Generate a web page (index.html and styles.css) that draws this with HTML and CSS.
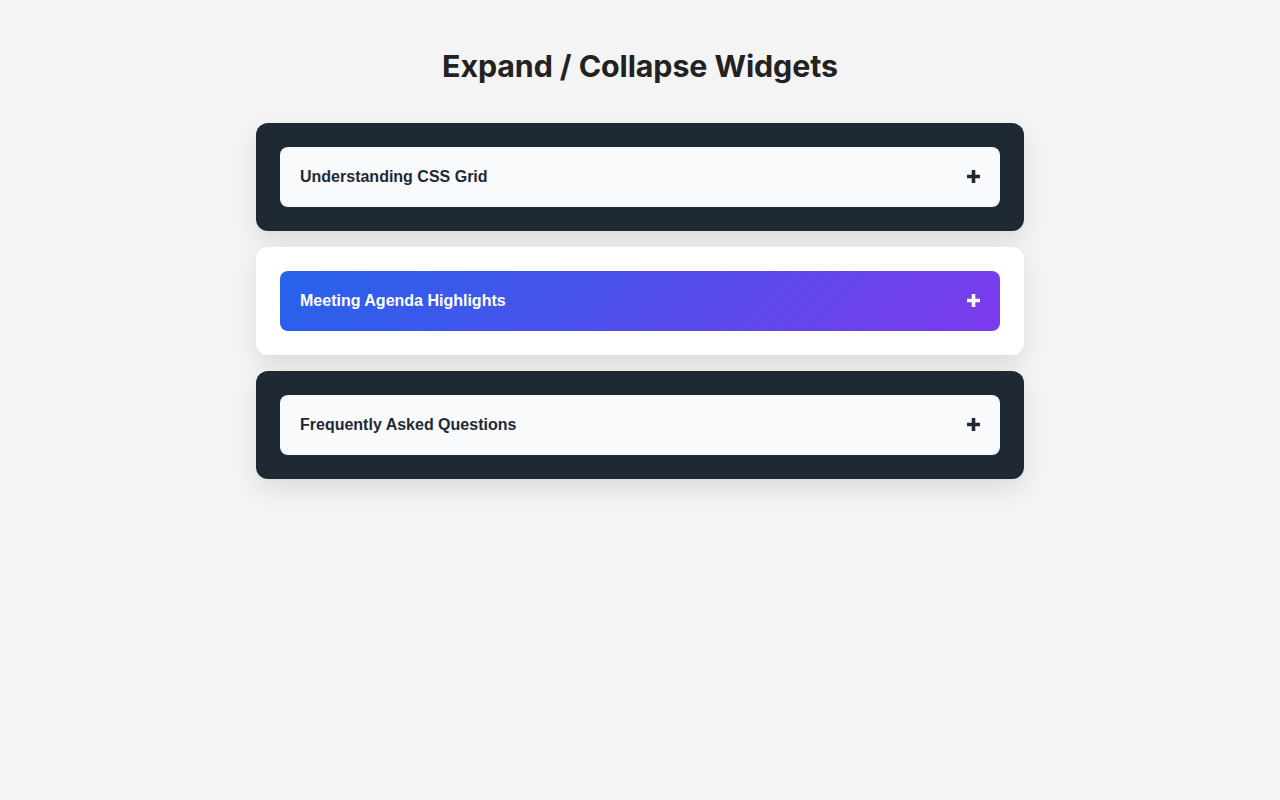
FILE: index.html
```html
<!DOCTYPE html>
<html lang="en">
<head>
<meta charset="utf-8">
<title>Expand / Collapse Widgets</title>
<link rel="stylesheet" href="styles.css">
</head>
<body>
<main class="page">
  <h1 class="title">Expand / Collapse Widgets</h1>
  <div class="list">
    <section class="card card-dark">
      <button class="head head-light" type="button">
        <span class="label">Understanding CSS Grid</span>
        <svg class="plus" width="13" height="13" viewBox="0 0 13 13"><path d="M6.5 0v13M0 6.5h13" stroke="currentColor" stroke-width="3.6"/></svg>
      </button>
    </section>
    <section class="card card-white">
      <button class="head head-grad" type="button">
        <span class="label">Meeting Agenda Highlights</span>
        <svg class="plus" width="13" height="13" viewBox="0 0 13 13"><path d="M6.5 0v13M0 6.5h13" stroke="currentColor" stroke-width="3.6"/></svg>
      </button>
    </section>
    <section class="card card-dark">
      <button class="head head-light" type="button">
        <span class="label">Frequently Asked Questions</span>
        <svg class="plus" width="13" height="13" viewBox="0 0 13 13"><path d="M6.5 0v13M0 6.5h13" stroke="currentColor" stroke-width="3.6"/></svg>
      </button>
    </section>
  </div>
</main>
</body>
</html>
```
FILE: styles.css
```css
html, body {
  margin: 0;
  padding: 0;
  background: #f4f4f4;
}
.page {
  width: 768px;
  margin: 0 auto;
  padding: 46px 0 80px;
}
.title {
  margin: 0 0 37px;
  font-family: Inter, "Liberation Sans", sans-serif;
  font-weight: 700;
  font-size: 30.4px;
  line-height: 40px;
  letter-spacing: -0.1px;
  color: #222222;
  text-align: center;
}
.list {
  display: flex;
  flex-direction: column;
  gap: 16px;
}
.card {
  padding: 24px;
  border-radius: 12px;
  box-shadow: 0 10px 25px rgba(0, 0, 0, 0.1);
}
.card-dark { background: #1f2933; }
.card-white { background: #ffffff; }
.head {
  display: flex;
  align-items: center;
  justify-content: space-between;
  width: 100%;
  height: 60px;
  padding: 0 20.5px 0 20px;
  border: 0;
  border-radius: 8px;
  font-family: "Liberation Sans", Arial, sans-serif;
  font-weight: 700;
  font-size: 16px;
  cursor: pointer;
  box-sizing: border-box;
}
.head-light {
  background: #f8fafc;
  color: #1f2937;
}
.head-grad {
  background: linear-gradient(135deg, #2563eb, #7c3aed);
  color: #ffffff;
}
.plus {
  display: block;
  margin-bottom: 2px;
}
```
